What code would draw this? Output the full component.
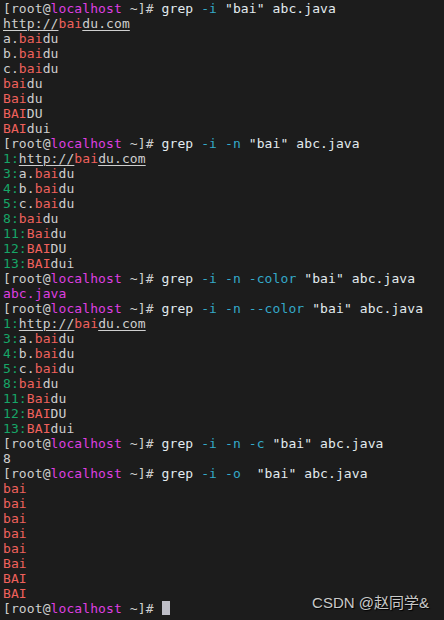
import React from "react";

const G = "text-[#cfcfcf]";
const R = "text-[#ef615c]";
const N = "text-[#17a567]";
const M = "text-[#df3fe0]";
const C = "text-[#34a9c9]";
const W = "text-[#e2ebef]";

function Prompt({ children }) {
  return (
    <div className="whitespace-pre">
      <span className={G}>[root@</span>
      <span className={M}>localhost</span>
      <span className={G}> ~]# </span>
      {children}
    </div>
  );
}

function Cmd({ opts, gap = " " }) {
  return (
    <>
      <span className={W}>grep</span>
      {opts.map((o, i) => (
        <span key={i} className={C}>
          {" " + o}
        </span>
      ))}
      <span className={W}>{gap + '"bai" abc.java'}</span>
    </>
  );
}

function Line({ num, pre, hit, post }) {
  return (
    <div className="whitespace-pre">
      {num && <span className={N}>{num}</span>}
      {pre && <span className={G}>{pre}</span>}
      <span className={R}>{hit}</span>
      {post && <span className={G}>{post}</span>}
    </div>
  );
}

function Url({ num }) {
  return (
    <div className="whitespace-pre">
      {num && <span className={N}>{num}</span>}
      <span className={`${G} underline underline-offset-2`}>http://</span>
      <span className={R}>bai</span>
      <span className={`${G} underline underline-offset-2`}>du.com</span>
    </div>
  );
}

function Block({ numbered }) {
  return (
    <>
      <Url num={numbered ? "1:" : null} />
      <Line num={numbered ? "3:" : null} pre="a." hit="bai" post="du" />
      <Line num={numbered ? "4:" : null} pre="b." hit="bai" post="du" />
      <Line num={numbered ? "5:" : null} pre="c." hit="bai" post="du" />
      <Line num={numbered ? "8:" : null} hit="bai" post="du" />
      <Line num={numbered ? "11:" : null} hit="Bai" post="du" />
      <Line num={numbered ? "12:" : null} hit="BAI" post="DU" />
      <Line num={numbered ? "13:" : null} hit="BAI" post="dui" />
    </>
  );
}

export default function App() {
  return (
    <div
      className="relative w-[444px] h-[620px] overflow-hidden bg-[#1c1c1c] pl-[3px] pt-px text-[13px] leading-[15px] tracking-[0.1px]"
      style={{ fontFamily: '"DejaVu Sans Mono", "Liberation Mono", monospace' }}
    >
      <Prompt>
        <Cmd opts={["-i"]} />
      </Prompt>
      <Block numbered={false} />
      <Prompt>
        <Cmd opts={["-i", "-n"]} />
      </Prompt>
      <Block numbered />
      <Prompt>
        <Cmd opts={["-i", "-n", "-color"]} />
      </Prompt>
      <div className={`whitespace-pre ${M}`}>abc.java</div>
      <Prompt>
        <Cmd opts={["-i", "-n", "--color"]} />
      </Prompt>
      <Block numbered />
      <Prompt>
        <Cmd opts={["-i", "-n", "-c"]} />
      </Prompt>
      <div className={`whitespace-pre ${G}`}>8</div>
      <Prompt>
        <Cmd opts={["-i", "-o"]} gap="  " />
      </Prompt>
      {["bai", "bai", "bai", "bai", "bai", "Bai", "BAI", "BAI"].map((t, i) => (
        <div key={i} className={`whitespace-pre ${R}`}>
          {t}
        </div>
      ))}
      <Prompt>
        <span className="inline-block w-[8px] h-[14px] align-[-2px] bg-[#bdbdc6]" />
      </Prompt>
      <div
        className="absolute right-[15px] bottom-[9px] text-[15px] leading-[17px] tracking-normal text-[#c9c9c9] [text-shadow:1px_1px_1px_#000]"
        style={{ fontFamily: '"Liberation Sans", "Noto Sans CJK SC", sans-serif' }}
      >
        CSDN @赵同学&amp;
      </div>
    </div>
  );
}
